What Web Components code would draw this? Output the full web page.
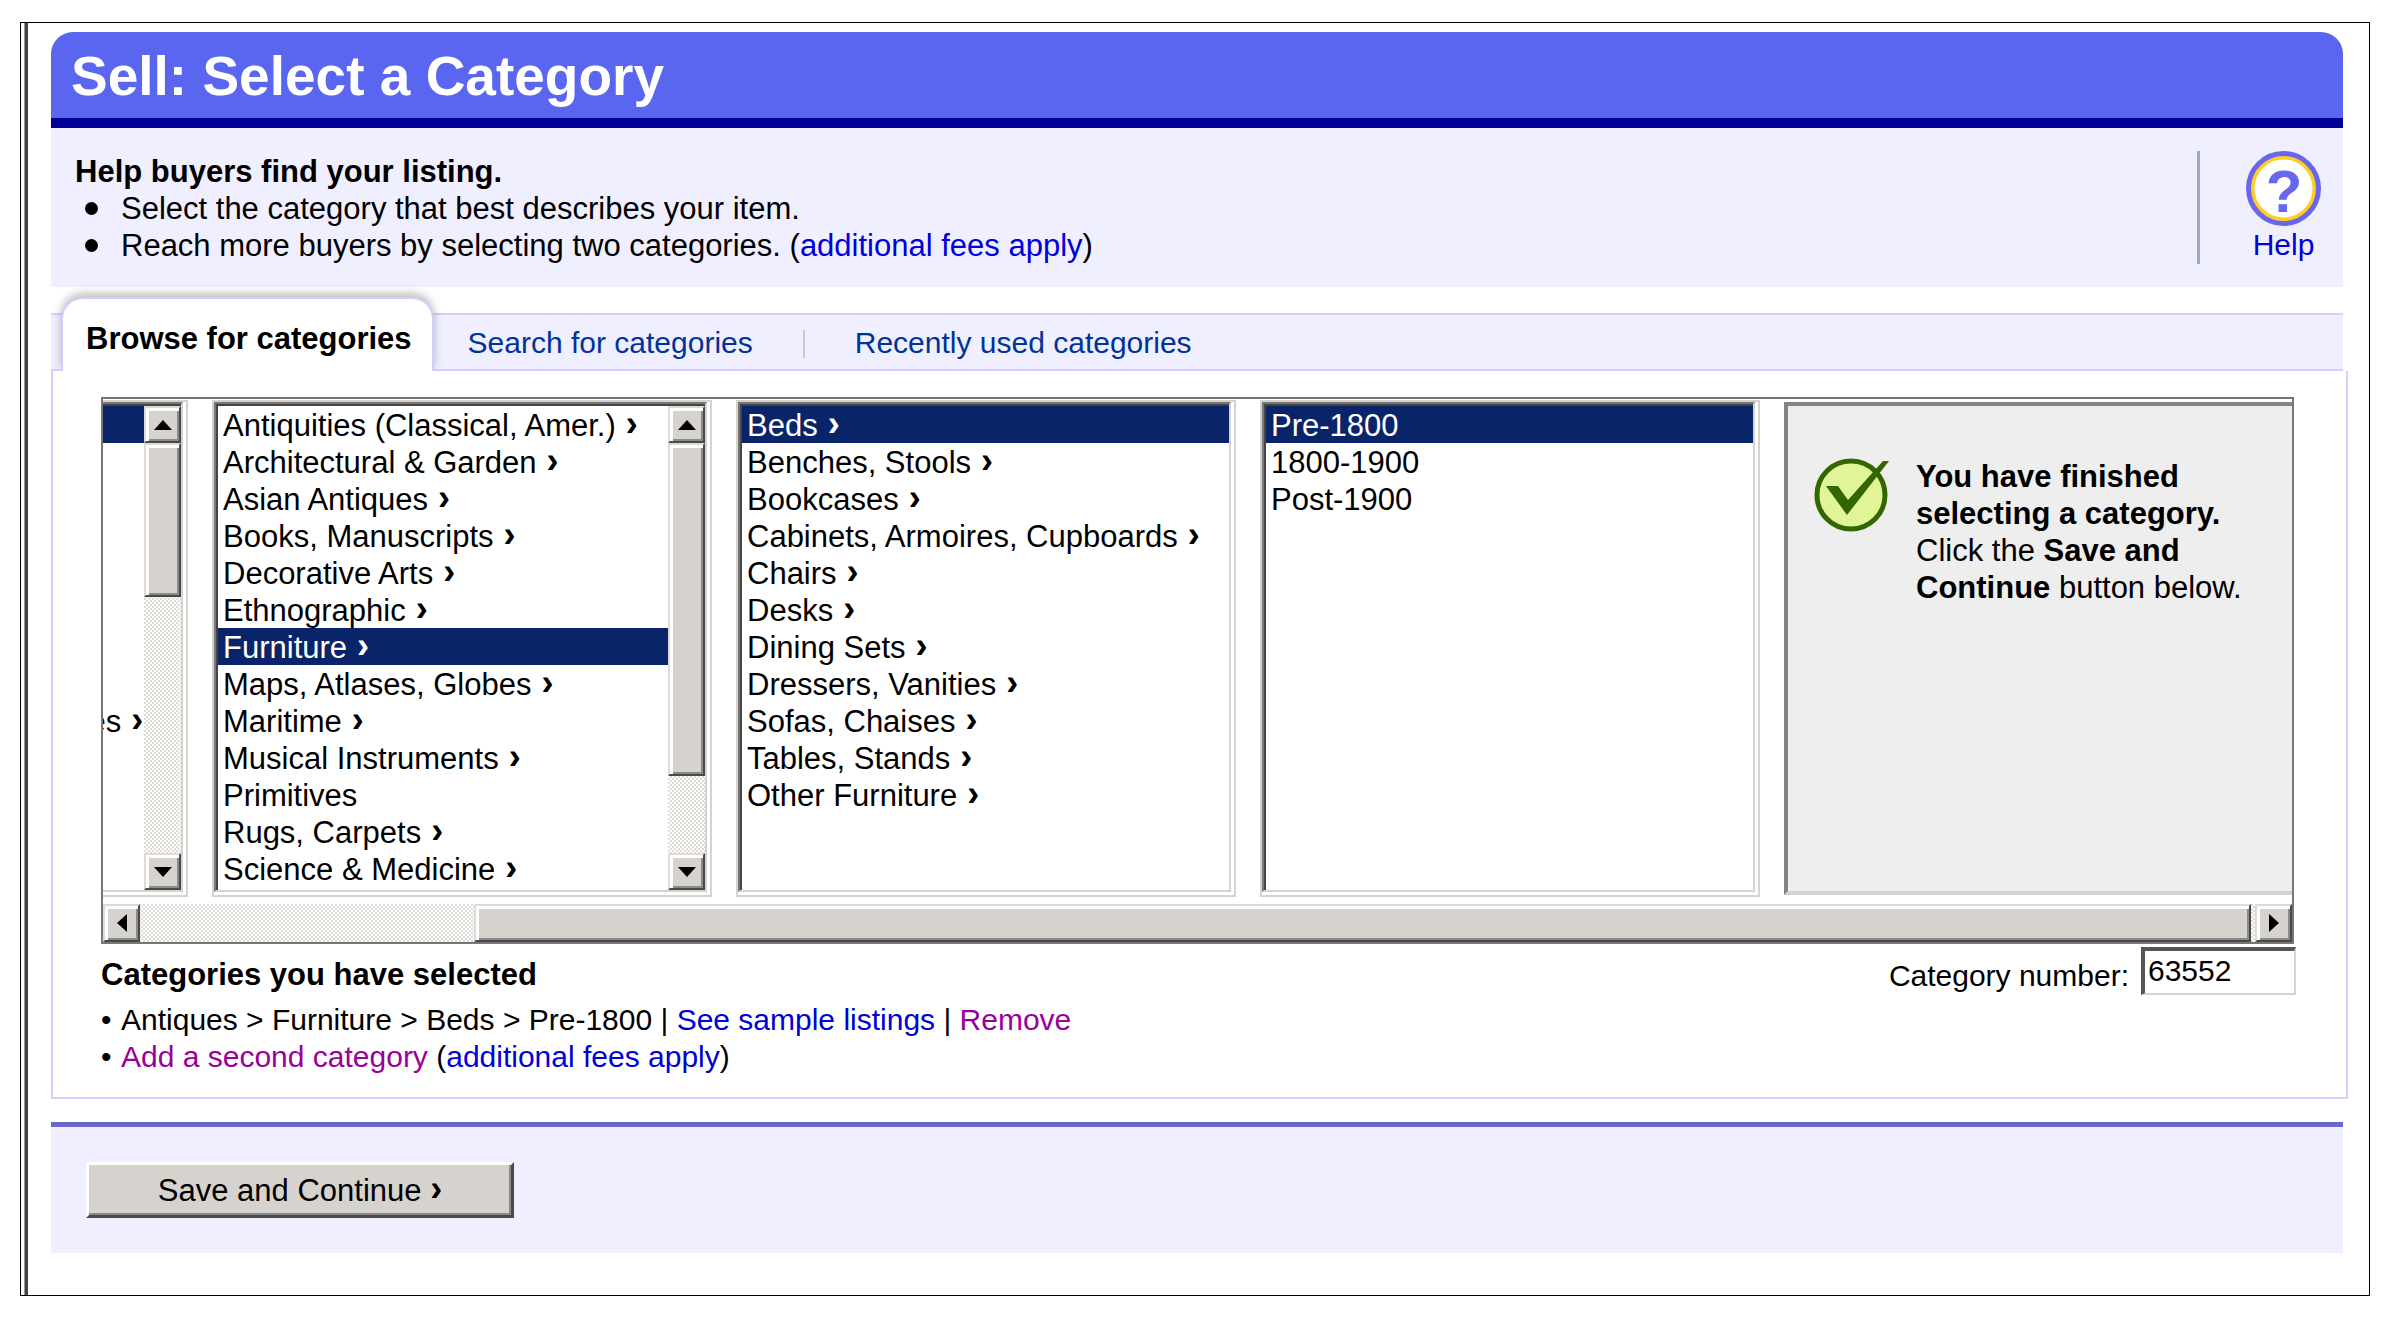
<!DOCTYPE html>
<html lang="en">
<head>
<meta charset="utf-8">
<title>Sell: Select a Category</title>
<style>
  :root {
    --lavender: #efefff;
    --line: #d0d0ff;
    --face: #d6d3ce;
    --link: #0000d8;
    --visited: #990099;
    --row: 37px;
  }

  body {
    margin: 22px 30px 24px 20px;
    background: #fff;
    color: #000;
    font: 31px/37px "Liberation Sans", Arial, sans-serif;
  }
</style>
</head>
<body>

<sell-page>
  <page-title>Sell: Select a Category</page-title>
  <help-panel></help-panel>
  <category-tabs></category-tabs>
  <category-picker></category-picker>
  <action-bar></action-bar>
</sell-page>

<script>
(() => {
  const define = (name, html, setup) => {
    customElements.define(name, class extends HTMLElement {
      constructor() {
        super();
        this.attachShadow({ mode: 'open' });
        this.shadowRoot.innerHTML = html;
      }

      connectedCallback() {
        if (setup) setup(this, this.shadowRoot);
      }
    });
  };

  define('sell-page', `
    <style>
      :host {
        display: block;
        padding: 9px 21px 42px 30px;
        border: 1px solid #000;
        box-shadow: inset 3px 0 #fff, inset 4px 0 #999, inset 7px 0 #444;
      }
    </style>
    <slot></slot>
  `);

  define('page-title', `
    <style>
      :host {
        display: block;
        margin-right: 5px;
        border-bottom: 10px solid #000099;
        border-radius: 22px 22px 0 0;
        background: #5a66ef;
      }
      h1 {
        margin: 0;
        padding: 12px 20px 10px;
        color: #fff;
        font-size: 55px;
        line-height: 64px;
      }
    </style>
    <h1><slot></slot></h1>
  `);

  define('help-panel', `
    <style>
      :host {
        display: flex;
        justify-content: space-between;
        margin-right: 5px;
        padding: 23px 22px 23px 24px;
        background: var(--lavender);
      }
      h2 { margin: 2px 0 0; font: inherit; font-weight: bold; }
      ul { margin: 0; padding: 0; list-style: none; }
      li { display: flex; align-items: center; gap: 23px; padding-left: 10px; }
      li::before {
        content: "";
        width: 13px;
        height: 13px;
        border-radius: 50%;
        background: #000;
      }
      a { color: var(--link); text-decoration: none; }
      .help {
        display: flex;
        flex-direction: column;
        align-items: center;
        padding-left: 46px;
        border-left: 3px solid #a3a3d6;
        font-size: 30px;
      }
      svg { display: block; width: 75px; height: 75px; }
    </style>
    <div>
      <h2>Help buyers find your listing.</h2>
      <ul>
        <li><span>Select the category that best describes your item.</span></li>
        <li><span>Reach more buyers by selecting two categories. (<a href="#fees">additional fees apply</a>)</span></li>
      </ul>
    </div>
    <a class="help" href="#help">
      <svg viewBox="0 0 75 75" aria-hidden="true">
        <circle cx="37.500" cy="37.500" r="31" fill="#fff" stroke="#ffcc22" stroke-width="4"/>
        <circle cx="37.500" cy="37.500" r="35" fill="none" stroke="#6666ee" stroke-width="5"/>
        <text x="38" y="61" text-anchor="middle" font-size="60" font-weight="bold" fill="#6666ee">?</text>
      </svg>
      Help
    </a>
  `);

  define('category-tabs', `
    <style>
      :host { display: block; padding-top: 10px; }
      nav {
        display: flex;
        align-items: flex-end;
        height: 74px;
        margin-right: 5px;
        background: linear-gradient(var(--line), var(--line)) 0 16px / 100% 2px no-repeat,
          linear-gradient(var(--lavender), var(--lavender)) 0 16px / 100% 58px no-repeat;
        box-shadow: inset 0 -2px var(--line);
      }
      a { color: #003399; font-size: 30px; text-decoration: none; }
      .active {
        margin-left: 10px;
        padding: 21px 20px 14px 23px;
        border: 2px solid var(--line);
        border-bottom: 0;
        border-radius: 22px 22px 0 0;
        background: #fff;
        box-shadow: 0 -4px 9px rgba(0, 0, 0, .25);
        clip-path: inset(-16px -12px 0 -12px);
        color: #000;
        font-size: 31px;
        font-weight: bold;
      }
      .search { margin-left: 34px; padding-bottom: 10px; }
      .search::after {
        content: "";
        display: inline-block;
        width: 2px;
        height: 28px;
        margin: 0 50px;
        background: #ccc;
        vertical-align: -5px;
      }
      .recent { padding-bottom: 10px; }
    </style>
    <nav>
      <a class="active" href="#browse" aria-current="page">Browse for categories</a>
      <a class="search" href="#search">Search for categories</a>
      <a class="recent" href="#recent">Recently used categories</a>
    </nav>
  `);

  // Classic bevelled scrollbar, thumb="start size" in percent of the track
  define('bevel-scrollbar', `
    <style>
      :host {
        display: flex;
        flex: none;
        flex-direction: column;
        width: 37px;
        background: repeating-conic-gradient(#fff 0 25%, #dedbd6 0 50%) 0 0 / 4px 4px;
      }
      :host([horizontal]) { flex-direction: row; width: auto; height: 38px; }
      button, .thumb {
        box-sizing: border-box;
        border: 2px solid;
        border-color: #dedbd6 #4a4a4a #4a4a4a #dedbd6;
        background: var(--face);
        box-shadow: inset 3px 3px #fff, inset -2px -2px #8a8a8a;
      }
      button {
        display: grid;
        place-items: center;
        flex: 0 0 37px;
        padding: 0;
      }
      svg { width: 18px; height: 18px; }
      .track { display: flex; flex-direction: inherit; flex: 1; }
      .before { flex: var(--start, 0) 0 0; }
      .thumb { flex: var(--size, 50) 0 0; }
      .after { flex: var(--rest, 50) 0 0; }
      :host([horizontal]) svg { transform: rotate(-90deg); }
    </style>
    <button type="button" aria-label="Back"><svg viewBox="0 0 18 18"><path d="M0 14 9 4l9 10z"/></svg></button>
    <div class="track"><div class="before"></div><div class="thumb"></div><div class="after"></div></div>
    <button type="button" aria-label="Forward"><svg viewBox="0 0 18 18"><path d="M0 4h18L9 14z"/></svg></button>
  `, (host, root) => {
    const [start, size] = host.getAttribute('thumb').split(' ').map(Number);
    root.querySelector('.before').style.setProperty('--start', start);
    root.querySelector('.thumb').style.setProperty('--size', size);
    root.querySelector('.after').style.setProperty('--rest', 100 - start - size);
  });

  define('category-column', `
    <style>
      :host {
        display: flex;
        flex: 0 0 500px;
        box-sizing: border-box;
        min-width: 0;
        height: 497px;
        border: 2px solid var(--face);
        background: #fff;
      }
      .inner {
        display: flex;
        flex: 1;
        min-width: 0;
        margin: 0 3px 3px 0;
        padding: 2px 0 0 2px;
        border: 2px solid;
        border-color: #777 var(--face) var(--face) #777;
        box-shadow: inset 2px 2px #444;
      }
      select {
        flex: 1;
        min-width: 0;
        height: 100%;
        margin: 0;
        padding: 0;
        border: 0;
        border-radius: 0;
        outline: 0;
        overflow: hidden;
        scrollbar-width: none;
        background: #fff;
        color: #000;
        font: inherit;
      }
      option {
        box-sizing: border-box;
        height: var(--row);
        min-height: 0;
        padding: 2px 5px 0;
        line-height: 37px;
      }
      option.more::after { content: " ›"; font-size: 36px; font-weight: bold; line-height: 0; }
      option:checked {
        background: #0a246a linear-gradient(#0a246a, #0a246a);
        color: #fff;
        -webkit-text-fill-color: #fff;
      }
    </style>
    <div class="inner">
      <select size="13"></select>
      <slot></slot>
    </div>
  `, (host, root) => {
    const select = root.querySelector('select');
    select.setAttribute('aria-label', host.getAttribute('label'));
    select.replaceChildren(...host.getAttribute('items').split('|').map(item => {
      const option = document.createElement('option');
      option.textContent = item.replace(' ›', '');
      if (item.endsWith('›')) option.className = 'more';
      option.selected = option.textContent === host.getAttribute('value');
      return option;
    }));
  });

  define('finished-note', `
    <style>
      :host {
        display: flex;
        flex: 0 0 508px;
        box-sizing: border-box;
        gap: 26px;
        height: 493px;
        margin-top: 2px;
        padding: 52px 0 0 26px;
        border: 4px solid;
        border-color: #848484 var(--face) var(--face) #848484;
        border-right: 0;
        background: #eee;
      }
      svg { flex: none; width: 76px; height: 75px; }
      p { margin: 0; width: 340px; }
    </style>
    <svg viewBox="0 0 76 75" aria-hidden="true">
      <circle cx="37" cy="37" r="34" fill="#dff598" stroke="#336600" stroke-width="5"/>
      <path d="M12 28h12l10 14L69 3h6L33 57z" fill="#336600"/>
    </svg>
    <p><b>You have finished selecting a category.</b><br>Click the <b>Save and</b> <b>Continue</b> button below.</p>
  `);

  // The newest column stays in view, older ones run out on the left
  define('category-browser', `
    <style>
      :host { display: block; border: 2px solid #777; }
      .columns {
        display: flex;
        justify-content: flex-end;
        gap: 24px;
        padding: 1px 0 7px;
        overflow: hidden;
      }
    </style>
    <div class="columns">
      <category-column label="Category" value="Antiques"
        items="Antiques ›|Art ›|Baby ›|Books ›|Business &amp; Industrial ›|Cameras &amp; Photo ›|Clothing ›|Coins ›|Collectibles, Antiques, Fixtures ›">
        <bevel-scrollbar thumb="0 37"></bevel-scrollbar>
      </category-column>
      <category-column label="Antiques" value="Furniture"
        items="Antiquities (Classical, Amer.) ›|Architectural &amp; Garden ›|Asian Antiques ›|Books, Manuscripts ›|Decorative Arts ›|Ethnographic ›|Furniture ›|Maps, Atlases, Globes ›|Maritime ›|Musical Instruments ›|Primitives|Rugs, Carpets ›|Science &amp; Medicine ›">
        <bevel-scrollbar thumb="0 81"></bevel-scrollbar>
      </category-column>
      <category-column label="Furniture" value="Beds"
        items="Beds ›|Benches, Stools ›|Bookcases ›|Cabinets, Armoires, Cupboards ›|Chairs ›|Desks ›|Dining Sets ›|Dressers, Vanities ›|Sofas, Chaises ›|Tables, Stands ›|Other Furniture ›"></category-column>
      <category-column label="Beds" value="Pre-1800" items="Pre-1800|1800-1900|Post-1900"></category-column>
      <finished-note></finished-note>
    </div>
    <bevel-scrollbar horizontal thumb="15.8 84"></bevel-scrollbar>
  `);

  define('selected-categories', `
    <style>
      :host { display: flex; justify-content: space-between; align-items: flex-start; }
      h2 { margin: 12px 0 8px; font: inherit; font-weight: bold; }
      ul { margin: 0; padding: 0; font-size: 30px; list-style: none; }
      li::before { content: "•"; display: inline-block; width: 20px; }
      a { color: var(--link); text-decoration: none; }
      .visited { color: var(--visited); }
      .number { display: flex; align-items: center; gap: 12px; padding-top: 3px; font-size: 30px; }
      label { padding-top: 8px; }
      input {
        box-sizing: border-box;
        width: 155px;
        height: 48px;
        padding: 0 3px 2px;
        border: 4px solid;
        border-width: 4px 2px 2px 4px;
        border-color: #555 var(--face) var(--face) #555;
        background: #fff;
        font: inherit;
      }
    </style>
    <div>
      <h2>Categories you have selected</h2>
      <ul>
        <li>Antiques &gt; Furniture &gt; Beds &gt; Pre-1800 | <a href="#sample">See sample listings</a> | <a class="visited" href="#remove">Remove</a></li>
        <li><a class="visited" href="#second">Add a second category</a> (<a href="#fees">additional fees apply</a>)</li>
      </ul>
    </div>
    <div class="number">
      <label for="number">Category number:</label>
      <input id="number" type="text" value="63552">
    </div>
  `);

  define('category-picker', `
    <style>
      :host {
        display: block;
        padding: 26px 52px 22px 48px;
        border: 2px solid var(--line);
        border-top: 0;
      }
      selected-categories { margin-right: -2px; }
    </style>
    <category-browser></category-browser>
    <selected-categories></selected-categories>
  `);

  define('action-bar', `
    <style>
      :host {
        display: block;
        margin: 23px 5px 0 0;
        padding: 35px;
        border-top: 5px solid #6666cc;
        background: var(--lavender);
      }
      button {
        display: block;
        width: 428px;
        height: 56px;
        padding: 0;
        border: 3px solid;
        border-color: #fff #4a4a4a #4a4a4a #fff;
        background: var(--face);
        box-shadow: inset -2px -2px #8a8a8a;
        color: #000;
        font: inherit;
      }
      b { font-size: 36px; line-height: 0; }
    </style>
    <button type="submit">Save and Continue <b>›</b></button>
  `);
})();
</script>
</body>
</html>
